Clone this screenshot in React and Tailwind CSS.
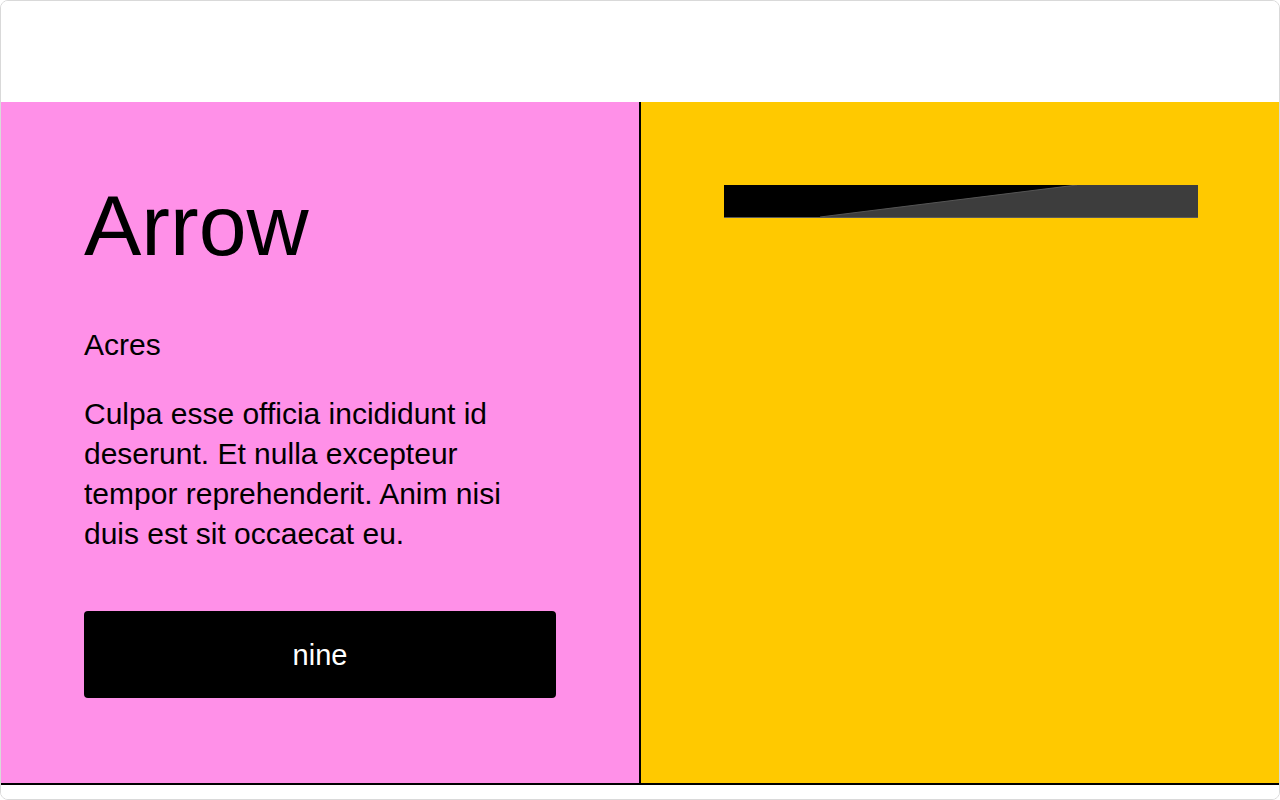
export default function App() {
  return (
    <div className="w-[1280px] h-[800px] bg-white border border-[#d9d9d9] rounded-[8px] overflow-hidden flex flex-col font-['Liberation_Sans',Arial,sans-serif] text-black">
      <div className="h-[101px] shrink-0 bg-white" />
      <div className="flex h-[683px] shrink-0 border-b-2 border-black">
        <div className="w-[640px] shrink-0 bg-[#ff90e8] border-r-2 border-black pl-[83px] pr-[83px] pt-[80px]">
          <h1 className="text-[86px] leading-none">Arrow</h1>
          <p className="mt-[57px] text-[30px] leading-[40px]">Acres</p>
          <p className="mt-[29px] text-[30px] leading-[40px]">
            Culpa esse officia incididunt id deserunt. Et nulla excepteur tempor reprehenderit. Anim nisi duis est sit occaecat eu.
          </p>
          <button className="mt-[57px] w-full h-[87px] bg-black text-white rounded-[4px] text-[29px] flex items-center justify-center pt-[3px]">
            nine
          </button>
        </div>
        <div className="flex-1 bg-[#ffc900] pl-[83px] pt-[83px]">
          <svg width="474" height="33" viewBox="0 0 474 33" className="block">
            <rect x="0" y="0" width="474" height="33" fill="#000" />
            <polygon points="96,32 353,0 474,0 474,32" fill="#3d3d3d" />
            <line x1="96" y1="32" x2="353" y2="0" stroke="#555" strokeWidth="1" />
            <rect x="0" y="32" width="474" height="1" fill="#5a5a5a" />
          </svg>
        </div>
      </div>
      <div className="flex-1 bg-white" />
    </div>
  );
}
